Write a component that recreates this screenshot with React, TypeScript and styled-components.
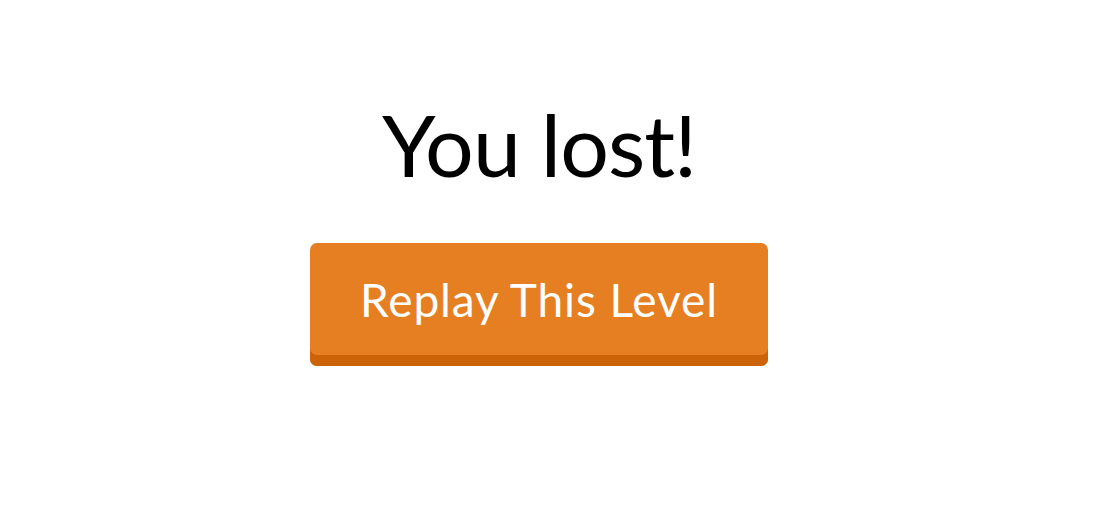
import React from "react";
import styled, { createGlobalStyle } from "styled-components";

const Global = createGlobalStyle`
  html, body { margin: 0; padding: 0; background: #ffffff; }
  body { font-family: Lato, "Open Sans", sans-serif; }
`;

const Screen = styled.main`
  display: flex;
  flex-direction: column;
  align-items: center;
  width: 1078px;
  padding-top: 94px;
`;

const Title = styled.h1`
  margin: 0;
  font-family: Lato, "Open Sans", sans-serif;
  font-weight: 400;
  font-size: 86px;
  line-height: 100px;
  letter-spacing: -1px;
  color: #000000;
`;

const ReplayButton = styled.button`
  margin-top: 49px;
  width: 458px;
  height: 123px;
  box-sizing: border-box;
  padding: 0 0 10px;
  border: none;
  border-radius: 7px;
  background: #e67e22;
  box-shadow: inset 0 -11px 0 #cc6309;
  color: #ffffff;
  font-family: Lato, "Open Sans", sans-serif;
  font-weight: 400;
  font-size: 46px;
  letter-spacing: 0.9px;
  cursor: pointer;
`;

export default function App() {
  return (
    <>
      <Global />
      <Screen>
        <Title>You lost!</Title>
        <ReplayButton>Replay This Level</ReplayButton>
      </Screen>
    </>
  );
}
